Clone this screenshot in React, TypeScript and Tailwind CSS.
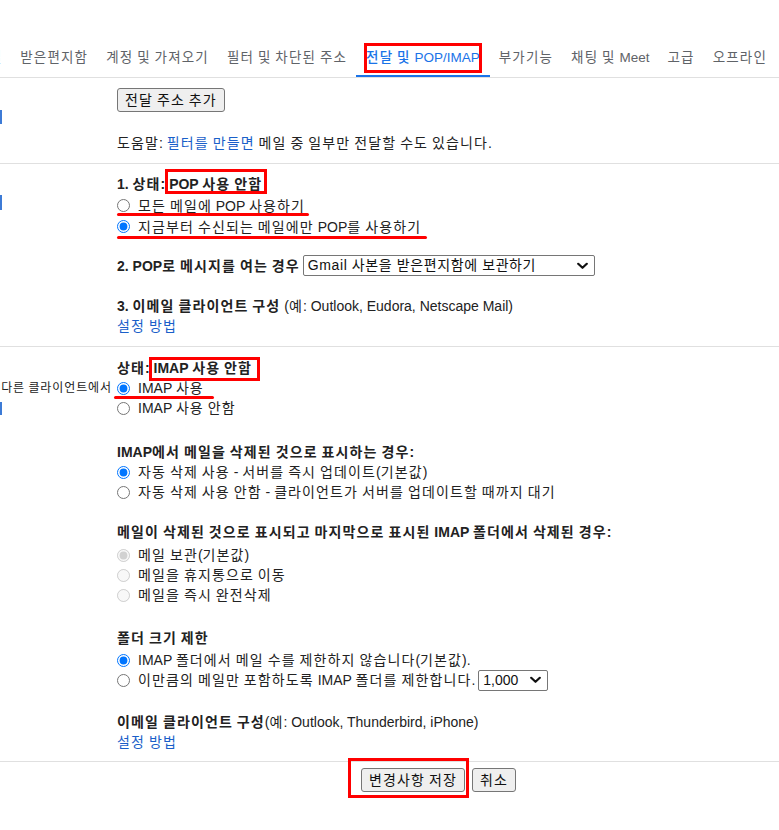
import React from "react";

const HANGUL = /([\u1100-\u11FF\u3130-\u318F\uAC00-\uD7AF]+)/;

function k(s: string, cls: string = "tracking-[1.12px]"): React.ReactNode[] {
  return s.split(HANGUL).map((part, i) =>
    i % 2 === 1 ? (
      <span key={i} className={cls}>
        {part}
      </span>
    ) : (
      <React.Fragment key={i}>{part}</React.Fragment>
    )
  );
}

const tabs = [
  "라벨",
  "받은편지함",
  "계정 및 가져오기",
  "필터 및 차단된 주소",
  "전달 및 POP/IMAP",
  "부가기능",
  "채팅 및 Meet",
  "고급",
  "오프라인",
];

function Chevron() {
  return (
    <svg
      width="11"
      height="7"
      viewBox="0 0 11 7"
      className="pointer-events-none absolute right-[7px] top-1/2 -translate-y-1/2"
    >
      <path
        d="M1.2 1.2 L5.5 5.3 L9.8 1.2"
        fill="none"
        stroke="#111"
        strokeWidth="2.2"
        strokeLinecap="round"
        strokeLinejoin="round"
      />
    </svg>
  );
}

function Select({ width, value, track }: { width: string; value: string; track?: boolean }) {
  return (
    <div className="relative inline-block">
      <select
        defaultValue={value}
        className={`appearance-none ${width} h-[21px] border border-[#767676] rounded-[2px] bg-white pl-[4px] text-[14px] leading-[19px] text-[#111] ${
          track ? "tracking-[0.6px]" : ""
        }`}
      >
        <option>{value}</option>
      </select>
      <Chevron />
    </div>
  );
}

function RadioRow({
  name,
  checked,
  disabled,
  text,
  children,
  className = "",
  h = "h-[20px]",
}: {
  name: string;
  checked?: boolean;
  disabled?: boolean;
  text: string;
  children?: React.ReactNode;
  className?: string;
  h?: string;
}) {
  return (
    <label className={`relative flex items-center gap-[8px] ${h} ${className}`}>
      <input
        type="radio"
        name={name}
        defaultChecked={checked}
        disabled={disabled}
        className="m-0 w-[13px] h-[13px] shrink-0"
      />
      <span className="whitespace-nowrap">{k(text)}</span>
      {children}
    </label>
  );
}

function LinkBar({ h }: { h: string }) {
  return <div className={`w-[2px] ${h} bg-[#3d7bd6]`} />;
}

function Btn({ text }: { text: string }) {
  return (
    <button className="h-[24px] rounded-[3px] border border-[#767676] bg-[#efefef] px-[7px] text-[14px] leading-none text-[#111]">
      {k(text)}
    </button>
  );
}

export default function App() {
  return (
    <div className="min-h-screen w-full overflow-hidden bg-white text-[14px] leading-[20px] text-[#222] font-['Liberation_Sans','Noto_Sans_CJK_KR',sans-serif]">
      {/* Tabs */}
      <div className="overflow-hidden border-b border-[#e0e0e0] pt-[38px]">
        <div className="-ml-[34px] flex whitespace-nowrap text-[13.5px]">
          {tabs.map((t) => {
            const active = t === "전달 및 POP/IMAP";
            return (
              <div
                key={t}
                className={
                  active
                    ? "relative -mb-px flex h-[40px] items-center border-b-[3px] border-[#1a73e8] px-[10px] pt-[2px] font-medium text-[#1a73e8]"
                    : "-mb-px flex h-[40px] items-center border-b-[3px] border-transparent px-[9px] pt-[2px] text-[#5f6368]"
                }
              >
                <span>{k(t, "tracking-[1.18px]")}</span>
                {active && (
                  <div className="absolute left-[8px] right-[8px] top-[5px] bottom-[2px] border-[3px] border-[#ff0000]" />
                )}
              </div>
            );
          })}
        </div>
      </div>

      {/* Forwarding */}
      <div className="grid grid-cols-[117px_1fr] border-b border-[#e0e0e0]">
        <div className="pt-[32px]">
          <LinkBar h="h-[14px]" />
        </div>
        <div className="pt-[10px] pb-[10px]">
          <Btn text="전달 주소 추가" />
          <div className="mt-[21px] h-[20px] whitespace-nowrap">
            {k("도움말: ")}
            <span className="text-[#1a5fc9]">{k("필터를 만들면")}</span>
            {k(" 메일 중 일부만 전달할 수도 있습니다.")}
          </div>
        </div>
      </div>

      {/* POP */}
      <div className="grid grid-cols-[117px_1fr] border-b border-[#e0e0e0]">
        <div className="pt-[31px]">
          <LinkBar h="h-[15px]" />
        </div>
        <div className="pt-[10px] pb-[10px]">
          <div className="h-[20px] whitespace-nowrap font-bold">
            {k("1. 상태: ")}
            <span className="relative inline-block leading-[20px]">
              {k("POP 사용 안함")}
              <span className="absolute -left-[4px] -right-[5px] -top-[5px] bottom-0 border-[3px] border-[#ff0000]" />
            </span>
          </div>
          <RadioRow name="pop" className="mt-[1px]" h="h-[21px]" text="모든 메일에 POP 사용하기">
            <span className="absolute left-0 top-[18px] h-[3px] w-[192px] rounded-full bg-[#ff0000]" />
          </RadioRow>
          <RadioRow name="pop" checked h="h-[21px]" text="지금부터 수신되는 메일에만 POP를 사용하기">
            <span className="absolute left-0 top-[20px] h-[3px] w-[310px] rounded-full bg-[#ff0000]" />
          </RadioRow>
          <div className="mt-[18px] flex h-[21px] items-center gap-[3px] whitespace-nowrap">
            <span className="font-bold">{k("2. POP로 메시지를 여는 경우")}</span>
            <Select width="w-[292px]" value="Gmail 사본을 받은편지함에 보관하기" track />
          </div>
          <div className="mt-[20px] h-[20px] whitespace-nowrap">
            <span className="font-bold">{k("3. 이메일 클라이언트 구성")}</span>
            {k(" (예: Outlook, Eudora, Netscape Mail)")}
          </div>
          <div className="h-[20px] text-[#1a5fc9]">{k("설정 방법")}</div>
        </div>
      </div>

      {/* IMAP */}
      <div className="grid grid-cols-[117px_1fr] border-b border-[#e0e0e0]">
        <div className="pt-[31px]">
          <div className="h-[20px] whitespace-nowrap pr-[5px] text-right text-[12px]">
            {k("다른 클라이언트에서", "tracking-[0.9px]")}
          </div>
          <div className="mt-[4px]">
            <LinkBar h="h-[13px]" />
          </div>
        </div>
        <div className="pt-[11px] pb-[9px]">
          <div className="h-[20px] whitespace-nowrap font-bold">
            {k("상태: ")}
            <span className="relative inline-block leading-[20px]">
              {k("IMAP 사용 안함")}
              <span className="absolute -left-[5px] -right-[8px] -top-[1px] -bottom-[3px] border-[3px] border-[#ff0000]" />
            </span>
          </div>
          <RadioRow name="imap" checked text="IMAP 사용">
            <span className="absolute -left-[3px] top-[18px] h-[3px] w-[100px] rounded-full bg-[#ff0000]" />
          </RadioRow>
          <RadioRow name="imap" text="IMAP 사용 안함" />

          <div className="mt-[24px] h-[20px] whitespace-nowrap font-bold">
            {k("IMAP에서 메일을 삭제된 것으로 표시하는 경우:")}
          </div>
          <RadioRow name="expunge" checked text="자동 삭제 사용 - 서버를 즉시 업데이트(기본값)" />
          <RadioRow name="expunge" text="자동 삭제 사용 안함 - 클라이언트가 서버를 업데이트할 때까지 대기" />

          <div className="mt-[20px] h-[20px] whitespace-nowrap font-bold">
            {k("메일이 삭제된 것으로 표시되고 마지막으로 표시된 IMAP 폴더에서 삭제된 경우:")}
          </div>
          <RadioRow name="deleted" checked disabled className="mt-[3px]" text="메일 보관(기본값)" />
          <RadioRow name="deleted" disabled text="메일을 휴지통으로 이동" />
          <RadioRow name="deleted" disabled text="메일을 즉시 완전삭제" />

          <div className="mt-[23px] h-[20px] font-bold">{k("폴더 크기 제한")}</div>
          <RadioRow
            name="limit"
            checked
            className="mt-[2px]"
            text="IMAP 폴더에서 메일 수를 제한하지 않습니다(기본값)."
          />
          <div className="flex h-[20px] items-center gap-[3px]">
            <RadioRow name="limit" text="이만큼의 메일만 포함하도록 IMAP 폴더를 제한합니다." />
            <Select width="w-[70px]" value="1,000" />
          </div>

          <div className="mt-[22px] h-[20px] whitespace-nowrap">
            <span className="font-bold">{k("이메일 클라이언트 구성")}</span>
            {k("(예: Outlook, Thunderbird, iPhone)")}
          </div>
          <div className="h-[20px] text-[#1a5fc9]">{k("설정 방법")}</div>
        </div>
      </div>

      {/* Footer */}
      <div className="grid grid-cols-[117px_1fr]">
        <div />
        <div className="flex justify-center gap-[7px] pr-[19px] pt-[6px]">
          <div className="relative">
            <Btn text="변경사항 저장" />
            <div className="absolute -left-[13px] -right-[4px] -top-[10px] -bottom-[6px] border-[3px] border-[#ff0000]" />
          </div>
          <Btn text="취소" />
        </div>
      </div>
    </div>
  );
}
